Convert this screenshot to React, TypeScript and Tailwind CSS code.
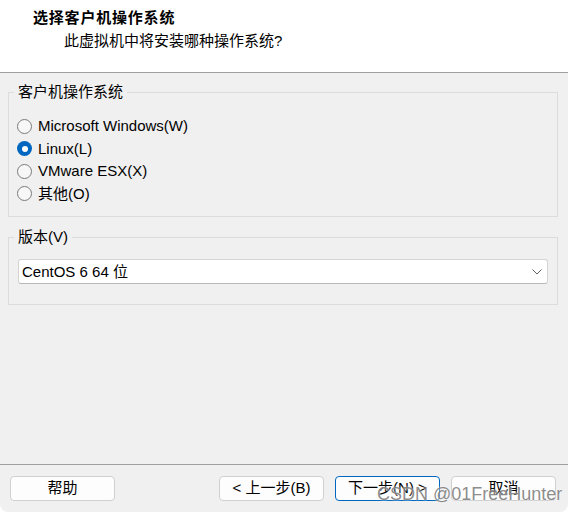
import React from 'react'

const font = { fontFamily: '"Liberation Sans", "Noto Sans CJK SC", sans-serif' }

const options = [
  { label: 'Microsoft Windows(W)', checked: false },
  { label: 'Linux(L)', checked: true },
  { label: 'VMware ESX(X)', checked: false },
  { label: '其他(O)', checked: false },
]

function Radio({ checked }: { checked: boolean }) {
  if (checked) {
    return (
      <span className="flex h-[15px] w-[15px] shrink-0 items-center justify-center rounded-full bg-[#0067c0]">
        <span className="h-[6px] w-[6px] rounded-full bg-white" />
      </span>
    )
  }
  return <span className="h-[15px] w-[15px] shrink-0 rounded-full border border-[#7a7a7a] bg-[#f7f7f7]" />
}

function Button({ children, primary }: { children: React.ReactNode; primary?: boolean }) {
  return (
    <button
      className={
        primary
          ? 'h-[25px] w-[105px] rounded-[4px] border border-[#0067c0] bg-[#fdfdfd] text-[15px] text-black'
          : 'h-[25px] w-[105px] rounded-[4px] border border-[#d0d0d0] bg-[#fdfdfd] text-[15px] text-black'
      }
    >
      {children}
    </button>
  )
}

export default function App() {
  return (
    <div className="h-[512px] w-[568px] overflow-hidden bg-white" style={font}>
      <div className="relative flex h-[512px] w-[568px] flex-col overflow-hidden rounded-b-[8px] bg-[#f0f0f0]">
        {/* header */}
        <div className="h-[73px] shrink-0 border-b border-[#a0a0a0] bg-white">
          <div className="pl-[33px] pt-[8px] text-[15px] font-bold leading-[20px] tracking-[0.8px] text-black">
            选择客户机操作系统
          </div>
          <div className="pl-[64px] pt-[3px] text-[15px] leading-[20px] text-black">
            此虚拟机中将安装哪种操作系统?
          </div>
        </div>

        {/* body */}
        <div className="flex-1 px-[8px] pt-[9px]">
          <fieldset className="w-[550px] border border-[#dcdcdc] pb-[11px] pl-[5px]">
            <legend className="px-[4px] text-[15px] leading-[20px] text-black">客户机操作系统</legend>
            <div className="mt-[13px] flex flex-col">
              {options.map((o) => (
                <div key={o.label} className="flex h-[22.5px] items-center gap-[6px] pl-[3px]">
                  <Radio checked={o.checked} />
                  <span className="text-[15px] leading-[20px] text-black">{o.label}</span>
                </div>
              ))}
            </div>
          </fieldset>

          <fieldset className="mt-[10px] w-[550px] border border-[#dcdcdc] pb-[20px] pl-[5px] pr-[9px]">
            <legend className="px-[4px] text-[15px] leading-[20px] text-black">版本(V)</legend>
            <div className="ml-[4px] mt-[12px] flex h-[25px] items-center justify-between rounded-[3px] border border-[#d4d4d4] border-b-[#b8b8b8] bg-white pl-[3px] pr-[5px]">
              <span className="text-[15px] leading-[20px] text-black">CentOS 6 64 位</span>
              <svg width="10" height="6" viewBox="0 0 10 6" fill="none">
                <path d="M0.5 0.5 L5 5 L9.5 0.5" stroke="#606060" strokeWidth="1" />
              </svg>
            </div>
          </fieldset>
        </div>

        {/* footer */}
        <div className="flex h-[48px] shrink-0 items-start border-t border-[#a0a0a0] pl-[10px] pt-[11px]">
          <Button>帮助</Button>
          <div className="ml-[104px] flex gap-[11px]">
            <Button>&lt; 上一步(B)</Button>
            <Button primary>下一步(N) &gt;</Button>
            <Button>取消</Button>
          </div>
        </div>

        {/* watermark */}
        <div className="pointer-events-none absolute left-[377px] top-[483px] text-[18px] leading-[22px] text-[#6e6e6e]/80 [text-shadow:0_0_2px_#ffffff]">
          CSDN @01FreeHunter
        </div>
      </div>
    </div>
  )
}
